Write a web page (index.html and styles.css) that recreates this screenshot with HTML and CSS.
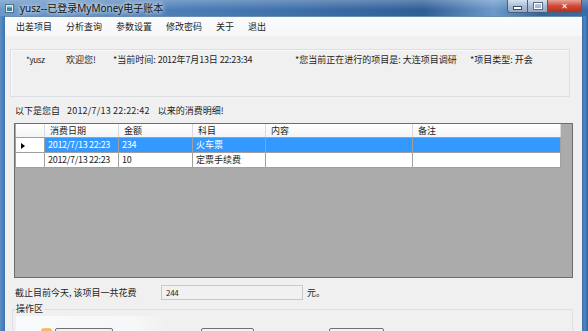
FILE: index.html
```html
<!DOCTYPE html>
<html lang="zh-CN">
<head>
    <meta charset="UTF-8">
    <title>yusz--已登录MyMoney电子账本</title>
    <link rel="stylesheet" href="styles.css">
</head>
<body>

<div class="window">
    <div class="titlebar">
        <svg class="app-icon" width="9" height="9" viewBox="0 0 9 9">
            <rect x="0.5" y="0.5" width="8" height="8" fill="#dfe6ea" stroke="#5d6f7a"/>
            <rect x="2" y="2" width="5" height="5" fill="#2f8c9c"/>
            <rect x="2" y="2" width="5" height="1.5" fill="#8fd0da"/>
        </svg>
        <span class="title">yusz--已登录MyMoney电子账本</span>
        <div class="controls">
            <span class="ctl min"><i></i></span>
            <span class="ctl max"><i></i></span>
            <span class="ctl close">✕</span>
        </div>
    </div>

    <div class="frame">
        <div class="client">
            <ul class="menubar">
                <li>出差项目</li>
                <li>分析查询</li>
                <li>参数设置</li>
                <li>修改密码</li>
                <li>关于</li>
                <li>退出</li>
            </ul>

            <div class="welcome">
                <span class="w-user num">*yusz</span>
                <span class="w-hello">欢迎您!</span>
                <span class="w-time">*当前时间: <span class="num">2012</span>年<span class="num">7</span>月<span class="num">13</span>日 <span class="num">22:23:34</span></span>
                <span class="w-project">*您当前正在进行的项目是: 大连项目调研</span>
                <span class="w-type">*项目类型: 开会</span>
            </div>

            <p class="since">
                <span>以下是您自</span>
                <span class="since-date">2012/7/13 22:22:42</span>
                <span>以来的消费明细!</span>
            </p>

            <div class="grid">
                <table>
                    <colgroup>
                        <col class="c-head">
                        <col class="c-date">
                        <col class="c-amount">
                        <col class="c-subject">
                        <col class="c-content">
                        <col class="c-note">
                    </colgroup>
                    <thead>
                        <tr>
                            <th></th>
                            <th>消费日期</th>
                            <th>金额</th>
                            <th>科目</th>
                            <th>内容</th>
                            <th>备注</th>
                        </tr>
                    </thead>
                    <tbody>
                        <tr class="selected">
                            <td class="rowhead"><span class="arrow"></span></td>
                            <td class="num">2012/7/13 22:23</td>
                            <td class="num">234</td>
                            <td>火车票</td>
                            <td></td>
                            <td></td>
                        </tr>
                        <tr>
                            <td class="rowhead"></td>
                            <td class="num">2012/7/13 22:23</td>
                            <td class="num">10</td>
                            <td>定票手续费</td>
                            <td></td>
                            <td></td>
                        </tr>
                    </tbody>
                </table>
            </div>

            <div class="total">
                <span class="total-label">截止目前今天, 该项目一共花费</span>
                <span class="total-box num">244</span>
                <span class="total-unit">元。</span>
            </div>

            <fieldset class="ops">
                <legend>操作区</legend>
                <div class="ops-row">
                    <div class="ops-panel">
                        <span class="ops-icon"></span>
                        <button class="btn btn-add"></button>
                    </div>
                    <button class="btn btn-edit"></button>
                    <button class="btn btn-del"></button>
                </div>
            </fieldset>
        </div>
    </div>
</div>

</body>
</html>
```

FILE: styles.css
```css
body {
    margin: 0;
    padding: 0;
    font-family: "Noto Sans CJK SC", "Noto Sans", sans-serif;
    font-size: 9px;
    color: #1e1e1e;
    background-color: #3f74b0;
}
.window {
    width: 588px;
    height: 331px;
    overflow: hidden;
    display: flex;
    flex-direction: column;
    background: linear-gradient(to bottom, #4b80bb, #3a6fab);
}
.titlebar {
    height: 16px;
    flex-shrink: 0;
    display: flex;
    align-items: center;
    padding-left: 5px;
    background:
        linear-gradient(to bottom, rgba(255, 255, 255, 0.25), rgba(255, 255, 255, 0) 60%),
        linear-gradient(to right, #6a98c9 0%, #4f81b9 25%, #3f70aa 50%, #2f5e96 72%, #6d9aca 84%, #34659f 92%, #3a6ca6 100%);
}
.app-icon {
    display: block;
    flex-shrink: 0;
}
.title {
    margin-left: 6px;
    font-family: "Noto Sans", "Noto Sans CJK SC", sans-serif;
    font-size: 10px;
    line-height: 14px;
    color: #141414;
    text-shadow: 0 0 4px #fff, 0 0 6px #eef4fa;
}
.controls {
    margin-left: auto;
    margin-right: 6px;
    align-self: flex-start;
    display: flex;
}
.ctl {
    height: 13px;
    display: flex;
    align-items: center;
    justify-content: center;
    border: 1px solid #4a5f78;
    border-top: none;
    box-sizing: border-box;
}
.ctl.min, .ctl.max {
    width: 20px;
    background: linear-gradient(to bottom, #d6e2ee, #a9bfd6 50%, #8fa9c5);
}
.ctl.min {
    width: 21px;
    border-radius: 0 0 0 3px;
}
.ctl.max {
    border-left: none;
}
.ctl.min i {
    display: block;
    width: 7px;
    height: 2px;
    margin-top: 4px;
    background: #fff;
    border: 1px solid #3c4e62;
}
.ctl.max i {
    display: block;
    width: 6px;
    height: 4px;
    border: 1px solid #fff;
    outline: 1px solid #5a6d82;
}
.ctl.close {
    width: 34px;
    border-left: none;
    border-radius: 0 0 3px 0;
    background: linear-gradient(to bottom, #e8a496, #cf4a38 50%, #b8301f);
    color: #fff;
    font-family: "DejaVu Sans", sans-serif;
    font-size: 8px;
    font-weight: bold;
}
.frame {
    flex: 1;
    display: flex;
    padding: 0 6px 0 5px;
    background: linear-gradient(to right, #5b8fc6 0px, #3d72ae 5px, transparent 5px), linear-gradient(to left, #2f609a 0px, #4f86c0 3px, #3b70ac 6px);
}
.client {
    flex: 1;
    background-color: #f0f0f0;
    border-top: 1px solid #6a8fb7;
}
.menubar {
    list-style: none;
    margin: 0;
    padding: 0 0 0 11px;
    height: 19px;
    display: flex;
    align-items: center;
    background: linear-gradient(to bottom, #fcfcfd, #f4f6f8);
}
.menubar li {
    margin-right: 14px;
    line-height: 12px;
}
.welcome {
    margin: 13px 12px 0 5px;
    height: 48px;
    box-sizing: border-box;
    padding: 4px 0 0 15px;
    border: 1px solid #dcdfe3;
    box-shadow: inset 1px 1px 0 #fafafa;
    display: flex;
    line-height: 12px;
    white-space: nowrap;
}
.w-user {
    width: 40px;
    font-size: 8px;
}
.w-hello {
    width: 47px;
}
.w-time {
    width: 182px;
}
.w-project {
    width: 175px;
}
.num {
    letter-spacing: -0.3px;
}
.since {
    margin: 8px 0 0 10px;
    line-height: 12px;
    display: flex;
    white-space: nowrap;
}
.since-date {
    margin: 0 8px 0 7px;
    letter-spacing: 0.2px;
}
.grid {
    margin: 6px 9px 0 9px;
    height: 155px;
    box-sizing: border-box;
    border: 1px solid #6d6d6d;
    background-color: #ababab;
}
.grid table {
    border-collapse: collapse;
    table-layout: fixed;
    width: 545px;
}
.c-head { width: 29px; }
.c-date { width: 74px; }
.c-amount { width: 74px; }
.c-subject { width: 73px; }
.c-content { width: 147px; }
.c-note { width: 148px; }
.grid th {
    height: 13px;
    padding: 0 0 0 5px;
    text-align: left;
    font-weight: normal;
    line-height: 12px;
    background: linear-gradient(to bottom, #ffffff, #f3f4f6);
    border-right: 1px solid #d8dbe0;
    border-bottom: 1px solid #a0a0a0;
}
.grid td {
    height: 14px;
    padding: 0 0 0 3px;
    line-height: 12px;
    white-space: nowrap;
    overflow: hidden;
    background-color: #fff;
    border: 1px solid #a0a0a0;
    border-top: none;
}
.grid td.rowhead {
    padding-left: 5px;
    background-color: #fff;
}
.grid tr.selected td {
    background-color: #3399ff;
    color: #fff;
}
.grid tr.selected td.rowhead {
    background-color: #fff;
}
.arrow {
    display: inline-block;
    vertical-align: middle;
    border-left: 4px solid #000;
    border-top: 3px solid transparent;
    border-bottom: 3px solid transparent;
}
.total {
    margin: 7px 0 0 10px;
    height: 15px;
    display: flex;
    align-items: center;
    line-height: 12px;
}
.total-label {
    width: 146px;
    white-space: nowrap;
}
.total-box {
    width: 142px;
    height: 15px;
    box-sizing: border-box;
    padding: 1px 0 0 4px;
    border: 1px solid #c9c9c9;
    background-color: #f1f1f1;
    font-size: 8px;
}
.total-unit {
    margin-left: 4px;
}
.ops {
    margin: 3px 9px 0 7px;
    padding: 0 0 0 3px;
    border: 1px solid #dcdfe3;
    border-bottom: none;
}
.ops legend {
    padding: 0 2px 0 0;
    line-height: 12px;
}
.ops-row {
    display: flex;
    align-items: flex-start;
}
.ops-panel {
    width: 150px;
    height: 24px;
    display: flex;
    align-items: flex-start;
    padding: 12px 0 0 25px;
    margin-top: 1px;
    box-sizing: border-box;
    background: linear-gradient(to right, #f9fafb, #f6f7f8 80%, #f0f0f0);
}
.ops-icon {
    width: 11px;
    height: 10px;
    margin-right: 3px;
    border-radius: 3px;
    background: linear-gradient(to bottom, #f9c07e, #ee8f3a);
}
.btn {
    height: 18px;
    padding: 0;
    border: 1px solid #707070;
    border-radius: 2px;
    background: linear-gradient(to bottom, #f4f4f4, #e4e4e4 50%, #d6d6d6);
}
.btn-add {
    width: 58px;
}
.btn-edit {
    width: 53px;
    margin: 13px 0 0 35px;
}
.btn-del {
    width: 55px;
    margin: 13px 0 0 75px;
}
```
